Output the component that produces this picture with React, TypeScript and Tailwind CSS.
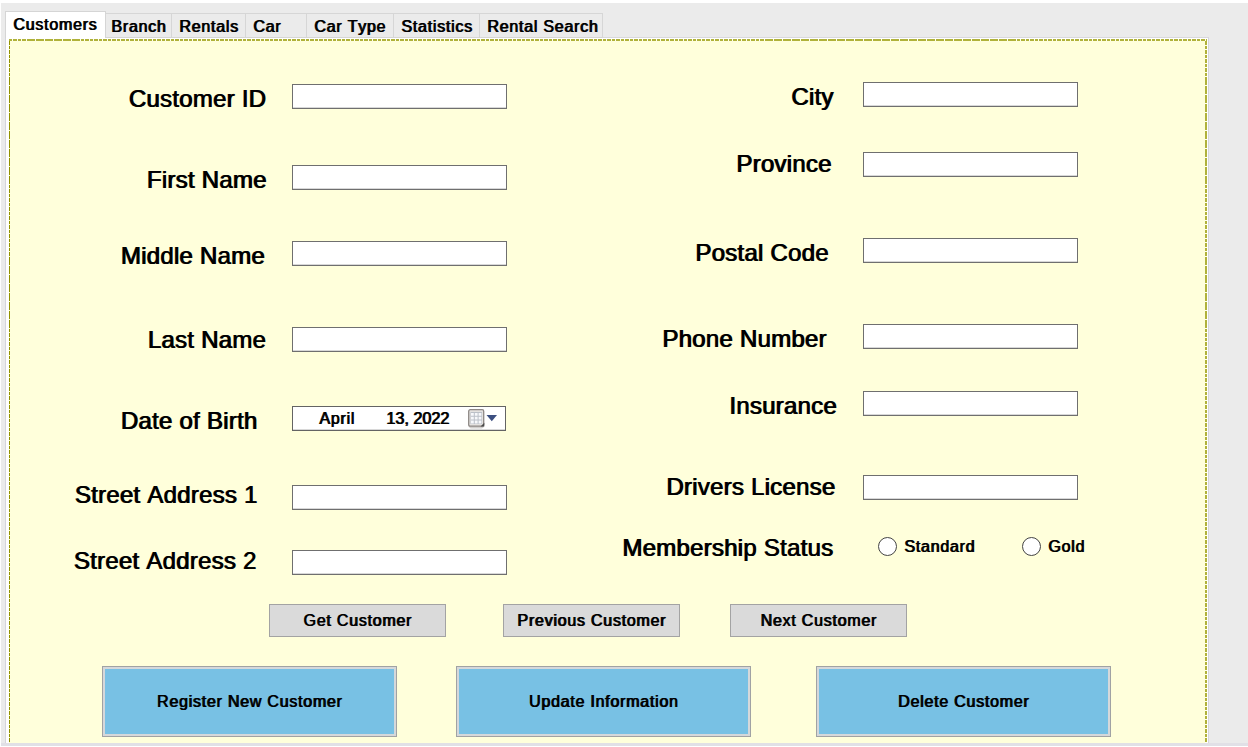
import React from "react";

const labelText =
  "block whitespace-nowrap text-[24px] leading-[25px] tracking-[0.25px] [font-kerning:none] [text-shadow:0.9px_0_0_#000] [-webkit-text-stroke:0.2px_#000]";
const smallFont =
  "whitespace-nowrap text-[16px] leading-[20px] [font-kerning:none] [text-shadow:0.9px_0_0_#000] [-webkit-text-stroke:0.15px_#000]";
const smallText = `${smallFont} tracking-[0.75px]`;

const tabs = [
  { name: "Branch", box: "w-[66px] pl-[5px]" },
  { name: "Rentals", box: "w-[74px] pl-[7px]" },
  { name: "Car", box: "w-[61px] pl-[7px]" },
  { name: "Car Type", box: "w-[87px] pl-[7px]" },
  { name: "Statistics", box: "w-[86px] pl-[7px]" },
  { name: "Rental Search", box: "w-[123px] pl-[7px]" },
];

const leftFields = [
  { name: "Customer ID", row: "h-[81px]", label: "pl-[118.5px] mt-[2px]" },
  { name: "First Name", row: "h-[76px]", label: "pl-[136.500px] mt-[2px]" },
  { name: "Middle Name", row: "h-[86px]", label: "pl-[110.500px] mt-[2px]" },
  { name: "Last Name", row: "h-[79px]", label: "pl-[137.500px]" },
  { name: "Date of Birth", row: "h-[79px]", label: "pl-[110.500px] mt-[2px]" },
  { name: "Street Address 1", row: "h-[65px]", label: "pl-[64.500px] -mt-[3px]" },
  { name: "Street Address 2", row: "h-[25px]", label: "pl-[63.500px] -mt-[2px]" },
];

const rightFields = [
  { name: "City", row: "h-[70px]", label: "pl-[191px] mt-[2px]" },
  { name: "Province", row: "h-[86px]", label: "pl-[136px] -mt-[1px]" },
  { name: "Postal Code", row: "h-[86px]", label: "pl-[95px] mt-[2px]" },
  { name: "Phone Number", row: "h-[67px]", label: "pl-[62px] mt-[2px]" },
  { name: "Insurance", row: "h-[84px]", label: "pl-[129px] mt-[2px]" },
  { name: "Drivers License", row: "h-[59px]", label: "pl-[66px] -mt-[1px]" },
];

function TextBox() {
  return (
    <input
      type="text"
      className="block h-[25px] w-[215px] shrink-0 border border-[#6f6f6f] bg-white px-1 shadow-[inset_0_-1px_0_#d8d8d8] outline-none"
    />
  );
}

function DatePicker() {
  return (
    <div className="flex h-[25px] w-[214px] shrink-0 items-start border border-[#646464] bg-white shadow-[inset_0_-1px_0_#d8d8d8]">
      <span className={`${smallText} ml-[26px] mt-[2px] w-[67px]`}>April</span>
      <span className={`${smallFont} mt-[2px] w-[82px] tracking-[0.1px]`}>13, 2022</span>
      <svg width="31" height="21" viewBox="0 0 31 21" className="mt-[1px]">
        <path d="M1 2.5H16V19L14 20.5H2.5L.5 18.5Z" fill="#d2d0ce" />
        <rect x="0.7" y="1.7" width="15" height="16.5" rx="1.5" fill="#e4e2e0" stroke="#8e8885" strokeWidth="1.3" />
        <rect x="2.5" y="4" width="11.5" height="12" fill="#bbc0c8" />
        <path d="M3 5h2.8v2.8H3zM6.8 5h2.8v2.8H6.800zM10.600 5h2.8v2.8h-2.8zM3 8.800h2.8v2.8H3zM6.800 8.800h2.8v2.8H6.800zM10.600 8.800h2.8v2.8h-2.8zM3 12.600h2.8v2.8H3zM6.800 12.600h2.8v2.8H6.800zM10.600 12.600h2.8v2.8h-2.8z" fill="#f7f8fb" />
        <path d="M12.500 18.500L16.300 14.700V18.500Z" fill="#4b4b4b" />
        <path d="M18.500 7H29L23.800 13.200Z" fill="#3c4f80" />
      </svg>
    </div>
  );
}

function Radio({ name }: { name: string }) {
  return (
    <label className="flex items-start">
      <span className="block size-[19px] rounded-full border-[1.3px] border-[#444] bg-white" />
      <span className={`${smallText} ml-[7px]`}>{name}</span>
    </label>
  );
}

function NavButton({ name }: { name: string }) {
  return (
    <button className={`${smallText} h-[33px] w-[177px] border border-[#a3a3a3] bg-[#dadada]`}>
      {name}
    </button>
  );
}

function ActionButton({ name }: { name: string }) {
  return (
    <button className="h-[71px] w-[295px] border border-[#a0a2a4] bg-[#d5d8da] p-[2px]">
      <span className={`${smallText} flex h-full items-center justify-center bg-[#78c1e4]`}>{name}</span>
    </button>
  );
}

const hDash = "bg-[repeating-linear-gradient(90deg,#b0b23a_0_3.5px,#fffff0_3.5px_4.5px)]";
const vDash = "bg-[repeating-linear-gradient(180deg,#929200_0_3.5px,#ffffc0_3.5px_4.5px)]";
const vDashRight = "bg-[repeating-linear-gradient(180deg,#b0b23a_0_3.5px,#fffff0_3.5px_4.5px)]";

export default function App() {
  return (
    <div className="flex h-[747px] w-[1248px] flex-col overflow-hidden bg-white pl-px pt-[3px] font-['Liberation_Sans',sans-serif] text-black">
      <div className="flex h-[740px] shrink-0 flex-col bg-[#ebebeb] pl-1">
        <div className="flex h-[35px] items-end">
          <div className="h-[27px] w-[101px] border border-b-0 border-[#d5d5d5] bg-white pl-[7px] pt-[3px]">
            <span className={`${smallText} block`}>Customers</span>
          </div>
          {tabs.map((tab) => (
            <div
              key={tab.name}
              className={`${tab.box} h-[25px] border-b border-r border-t border-[#d6d6d6] pt-[3px]`}
            >
              <span className={`${smallText} block`}>{tab.name}</span>
            </div>
          ))}
          <div className="h-px w-[606px] bg-[#d8d8dd]" />
        </div>
        <div className="flex h-[705px] w-[1204px] flex-col border-x border-[#d5d5dc] bg-white pl-[3px] pr-[1px] pt-px">
          <div className={`h-[2px] ${hDash}`} />
          <div className="flex h-[702px]">
            <div className={`w-px ${vDash}`} />
            <main className="flex-1 bg-[#ffffdb]">
              <div className="flex h-[563px]">
                <section className="w-[570px] pt-[43px]">
                  {leftFields.map((field) => (
                    <div key={field.name} className={`flex items-start ${field.row}`}>
                      <div className={`w-[282px] shrink-0 ${field.label}`}>
                        <span className={labelText}>{field.name}</span>
                      </div>
                      {field.name === "Date of Birth" ? <DatePicker /> : <TextBox />}
                    </div>
                  ))}
                </section>
                <section className="pl-[20px] pt-[41px]">
                  {rightFields.map((field) => (
                    <div key={field.name} className={`flex items-start ${field.row}`}>
                      <div className={`w-[263px] shrink-0 ${field.label}`}>
                        <span className={labelText}>{field.name}</span>
                      </div>
                      <TextBox />
                    </div>
                  ))}
                  <div className="flex items-start">
                    <span className={`${labelText} mt-[1px] w-[256px] pl-[22px]`}>Membership Status</span>
                    <div className="ml-[22px] mt-[3px] flex w-[144px]">
                      <Radio name="Standard" />
                    </div>
                    <div className="mt-[3px] flex">
                      <Radio name="Gold" />
                    </div>
                  </div>
                </section>
              </div>
              <div className="flex pl-[259px]">
                <NavButton name="Get Customer" />
                <div className="ml-[57px] mr-[50px]">
                  <NavButton name="Previous Customer" />
                </div>
                <NavButton name="Next Customer" />
              </div>
              <div className="mt-[29px] flex pl-[92px]">
                <ActionButton name="Register New Customer" />
                <div className="ml-[59px] mr-[65px]">
                  <ActionButton name="Update Information" />
                </div>
                <ActionButton name="Delete Customer" />
              </div>
            </main>
            <div className={`w-[2px] ${vDashRight}`} />
          </div>
        </div>
      </div>
      <div className="h-[3px] shrink-0 bg-[#e1e0e6]" />
    </div>
  );
}
